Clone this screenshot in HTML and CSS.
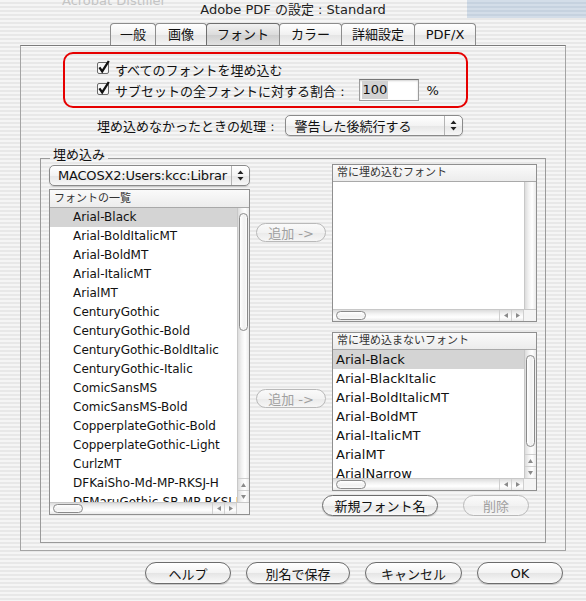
FILE: index.html
```html
<!DOCTYPE html>
<html>
    <head>
        <meta charset="utf-8">
        <title>Adobe PDF の設定 : Standard</title>
        <link rel="stylesheet" href="styles.css">
    </head>
    <body>
        <div class="titlebar">
            <span class="ghost">Acrobat Distiller</span>
            <span class="desk"></span>
            <span class="title">Adobe PDF の設定 : Standard</span>
        </div>

        <div class="tabs">
            <span class="tab">一般</span>
            <span class="tab">画像</span>
            <span class="tab active">フォント</span>
            <span class="tab">カラー</span>
            <span class="tab">詳細設定</span>
            <span class="tab">PDF/X</span>
        </div>

        <div class="panel">
            <div class="embed-opts">
                <div class="check-row">
                    <svg class="checkbox" width="14" height="15" viewBox="0 0 14 15">
                        <rect x="0.5" y="2.5" width="11" height="11" rx="1.5" fill="#f6f6f6" stroke="#6a6a6a"/>
                        <path d="M2.4 7.4 L5.2 11.4 L11.8 1" fill="none" stroke="#111" stroke-width="2.3"/>
                    </svg>
                    <span>すべてのフォントを埋め込む</span>
                </div>
                <div class="check-row">
                    <svg class="checkbox" width="14" height="15" viewBox="0 0 14 15">
                        <rect x="0.5" y="2.5" width="11" height="11" rx="1.5" fill="#f6f6f6" stroke="#6a6a6a"/>
                        <path d="M2.4 7.4 L5.2 11.4 L11.8 1" fill="none" stroke="#111" stroke-width="2.3"/>
                    </svg>
                    <span>サブセットの全フォントに対する割合 :</span>
                    <span class="field"><span class="sel">100</span></span>
                    <span class="pct">%</span>
                </div>
            </div>

            <div class="fail-row">
                <span>埋め込めなかったときの処理 :</span>
                <span class="popup fail">
                    <span class="popup-text">警告した後続行する</span>
                    <span class="popup-arrows">
                        <svg width="7" height="11" viewBox="0 0 7 11"><path d="M3.5 0.5 L6.5 4 L0.5 4 Z M0.5 7 L6.5 7 L3.5 10.5 Z" fill="#222"/></svg>
                    </span>
                </span>
            </div>

            <div class="group">
                <span class="group-title">埋め込み</span>

                <div class="col-left">
                    <span class="popup path">
                        <span class="popup-text">MACOSX2:Users:kcc:Librar</span>
                        <span class="popup-arrows">
                            <svg width="7" height="11" viewBox="0 0 7 11"><path d="M3.5 0.5 L6.5 4 L0.5 4 Z M0.5 7 L6.5 7 L3.5 10.5 Z" fill="#222"/></svg>
                        </span>
                    </span>

                    <div class="listbox fontlist">
                        <div class="list-head">フォントの一覧</div>
                        <div class="list-body">
                            <ul class="rows">
                                <li class="selected">Arial-Black</li>
                                <li>Arial-BoldItalicMT</li>
                                <li>Arial-BoldMT</li>
                                <li>Arial-ItalicMT</li>
                                <li>ArialMT</li>
                                <li>CenturyGothic</li>
                                <li>CenturyGothic-Bold</li>
                                <li>CenturyGothic-BoldItalic</li>
                                <li>CenturyGothic-Italic</li>
                                <li>ComicSansMS</li>
                                <li>ComicSansMS-Bold</li>
                                <li>CopperplateGothic-Bold</li>
                                <li>CopperplateGothic-Light</li>
                                <li>CurlzMT</li>
                                <li>DFKaiSho-Md-MP-RKSJ-H</li>
                                <li>DFMaruGothic-SB-MP-RKSJ-H</li>
                            </ul>
                            <div class="vscroll">
                                <span class="vthumb long"></span>
                                <span class="vspace"></span>
                                <span class="varrow"><svg width="5" height="4" viewBox="0 0 5 4"><path d="M2.5 0 L5 4 L0 4 Z" fill="#8a8a8a"/></svg></span>
                                <span class="varrow"><svg width="5" height="4" viewBox="0 0 5 4"><path d="M0 0 L5 0 L2.5 4 Z" fill="#8a8a8a"/></svg></span>
                            </div>
                        </div>
                        <div class="hscroll">
                            <span class="hthumb"></span>
                            <span class="hspace"></span>
                            <span class="harrow"><svg width="4" height="5" viewBox="0 0 4 5"><path d="M0 2.5 L4 0 L4 5 Z" fill="#8a8a8a"/></svg></span>
                            <span class="harrow"><svg width="4" height="5" viewBox="0 0 4 5"><path d="M0 0 L4 2.5 L0 5 Z" fill="#8a8a8a"/></svg></span>
                            <span class="corner"></span>
                        </div>
                    </div>
                </div>

                <div class="col-mid">
                    <span class="btn small disabled first">追加 -&gt;</span>
                    <span class="btn small disabled second">追加 -&gt;</span>
                </div>

                <div class="col-right">
                    <div class="listbox always">
                        <div class="list-head">常に埋め込むフォント</div>
                        <div class="list-body">
                            <ul class="rows big"></ul>
                            <div class="vscroll empty"></div>
                        </div>
                        <div class="hscroll">
                            <span class="hthumb"></span>
                            <span class="hspace"></span>
                            <span class="harrow"><svg width="4" height="5" viewBox="0 0 4 5"><path d="M0 2.5 L4 0 L4 5 Z" fill="#8a8a8a"/></svg></span>
                            <span class="harrow"><svg width="4" height="5" viewBox="0 0 4 5"><path d="M0 0 L4 2.5 L0 5 Z" fill="#8a8a8a"/></svg></span>
                            <span class="corner"></span>
                        </div>
                    </div>

                    <div class="listbox never">
                        <div class="list-head">常に埋め込まないフォント</div>
                        <div class="list-body">
                            <ul class="rows big">
                                <li class="selected">Arial-Black</li>
                                <li>Arial-BlackItalic</li>
                                <li>Arial-BoldItalicMT</li>
                                <li>Arial-BoldMT</li>
                                <li>Arial-ItalicMT</li>
                                <li>ArialMT</li>
                                <li>ArialNarrow</li>
                            </ul>
                            <div class="vscroll">
                                <span class="vthumb short"></span>
                                <span class="vspace"></span>
                                <span class="varrow"><svg width="5" height="4" viewBox="0 0 5 4"><path d="M2.5 0 L5 4 L0 4 Z" fill="#8a8a8a"/></svg></span>
                                <span class="varrow"><svg width="5" height="4" viewBox="0 0 5 4"><path d="M0 0 L5 0 L2.5 4 Z" fill="#8a8a8a"/></svg></span>
                            </div>
                        </div>
                        <div class="hscroll">
                            <span class="hthumb"></span>
                            <span class="hspace"></span>
                            <span class="harrow"><svg width="4" height="5" viewBox="0 0 4 5"><path d="M0 2.5 L4 0 L4 5 Z" fill="#8a8a8a"/></svg></span>
                            <span class="harrow"><svg width="4" height="5" viewBox="0 0 4 5"><path d="M0 0 L4 2.5 L0 5 Z" fill="#8a8a8a"/></svg></span>
                            <span class="corner"></span>
                        </div>
                    </div>

                    <div class="list-buttons">
                        <span class="btn newfont">新規フォント名</span>
                        <span class="btn delete disabled">削除</span>
                    </div>
                </div>
            </div>
        </div>

        <div class="actions">
            <span class="btn help">ヘルプ</span>
            <span class="btn saveas">別名で保存</span>
            <span class="btn cancel">キャンセル</span>
            <span class="btn ok">OK</span>
        </div>
    </body>
</html>
```

FILE: styles.css
```css
body {
    margin: 0;
    width: 586px;
    height: 601px;
    overflow: hidden;
    font-family: "DejaVu Sans", "Noto Sans CJK JP", sans-serif;
    font-size: 13px;
    color: #111;
    background: repeating-linear-gradient(#f5f5f5 0 2px, #e8e8e8 2px 4px) fixed;
}

/* title bar */
.titlebar {
    position: relative;
    height: 23px;
    display: flex;
    justify-content: center;
}
.title {
    margin-top: 2px;
    line-height: 16px;
    color: #222;
    position: relative;
}
.ghost {
    position: absolute;
    top: -7px;
    left: 62px;
    color: #c4c4c4;
    line-height: 16px;
}
.desk {
    position: absolute;
    top: 0;
    right: 0;
    width: 119px;
    height: 18px;
    background: repeating-linear-gradient(#d3dde8 0 2px, #c6d2df 2px 4px);
}

/* tabs */
.tabs {
    display: flex;
    justify-content: center;
    height: 22px;
    padding-left: 1px;
}
.tab {
    box-sizing: border-box;
    height: 22px;
    line-height: 21px;
    text-align: center;
    border: 1px solid #8c8c8c;
    border-bottom: none;
    border-radius: 4px 4px 0 0;
    margin-left: -1px;
    background: linear-gradient(#ffffff, #f1f1f1 50%, #e4e4e4 52%, #f4f4f4);
}
.tab:nth-child(1) { width: 46px; }
.tab:nth-child(2) { width: 52px; }
.tab:nth-child(3) { width: 74px; }
.tab:nth-child(4) { width: 63px; }
.tab:nth-child(5) { width: 74px; }
.tab:nth-child(6) { width: 62px; }
.tab.active {
    border-color: #6e6e6e;
    background: linear-gradient(#f2f2f2, #dcdcdc 50%, #cdcdcd 52%, #e2e2e2);
}

/* tab pane */
.panel {
    box-sizing: border-box;
    height: 506px;
    margin: 0 20px;
    border: 1px solid #a4a4a4;
    border-top-color: #7b7b7b;
    box-shadow: inset 0 1px 0 #fcfcfc;
}

.embed-opts {
    box-sizing: border-box;
    width: 405px;
    height: 56px;
    margin: 6px 0 0 42px;
    padding: 5px 0 0 32px;
    border: 2px solid #e60000;
    border-radius: 10px;
}
.check-row {
    display: flex;
    align-items: center;
    height: 20px;
}
.check-row + .check-row {
    height: 22px;
}
.checkbox {
    margin: -3px 4px 0 0;
    flex: none;
}
.field {
    box-sizing: border-box;
    width: 60px;
    height: 22px;
    margin-left: 14px;
    padding: 1px 0 0 2px;
    background: #fff;
    border: 1px solid #9c9c9c;
    border-top-color: #777;
    box-shadow: inset 0 1px 2px rgba(0,0,0,.18);
    font-size: 13px;
    line-height: 18px;
}
.sel {
    display: inline-block;
    height: 18px;
    background: #d2d2d2;
    padding: 0 1px;
}
.pct {
    margin-left: 8px;
}

.fail-row {
    display: flex;
    align-items: center;
    height: 21px;
    margin-top: 7px;
    padding-left: 76px;
}

/* popup menus */
.popup {
    box-sizing: border-box;
    display: flex;
    align-items: center;
    height: 21px;
    border: 1px solid #8a8a8a;
    border-radius: 5px;
    background: linear-gradient(#ffffff, #f3f3f3 50%, #e6e6e6 52%, #f7f7f7);
    box-shadow: 0 1px 1px rgba(0,0,0,.15);
}
.popup-text {
    flex: 1;
    padding-left: 9px;
    white-space: nowrap;
    overflow: hidden;
}
.popup-arrows {
    display: flex;
    align-items: center;
    justify-content: center;
    width: 17px;
    height: 100%;
    border-left: 1px solid #b4b4b4;
}
.popup.fail {
    width: 178px;
    margin-left: 10px;
}
.popup.path {
    width: 201px;
    font-size: 13px;
    letter-spacing: -0.2px;
}
.popup.path .popup-text {
    padding-left: 8px;
}

/* embed group */
.group {
    position: relative;
    box-sizing: border-box;
    display: grid;
    grid-template-columns: 201px 82px 205px;
    align-items: start;
    width: 506px;
    height: 385px;
    margin: 22px 0 0 19px;
    padding: 6px 8px 0 8px;
    border: 1px solid #9a9a9a;
}
.group-title {
    position: absolute;
    top: -12px;
    left: 9px;
    padding: 0 3px;
    line-height: 16px;
    background: repeating-linear-gradient(#f5f5f5 0 2px, #e8e8e8 2px 4px) fixed;
}

.col-left {
    display: flex;
    flex-direction: column;
}
.col-mid {
    display: flex;
    flex-direction: column;
    align-items: center;
}
.col-right {
    display: flex;
    flex-direction: column;
}

/* list boxes */
.listbox {
    box-sizing: border-box;
    display: flex;
    flex-direction: column;
    border: 1px solid #8f8f8f;
    background: #fff;
}
.fontlist {
    height: 326px;
    margin-top: 3px;
}
.always {
    height: 158px;
    margin-top: -1px;
}
.never {
    height: 159px;
    margin-top: 10px;
}
.list-head {
    flex: none;
    height: 16px;
    line-height: 16px;
    padding-left: 4px;
    font-size: 11px;
    color: #333;
    background: linear-gradient(#fafafa, #ececec);
    border-bottom: 1px solid #a9a9a9;
}
.fontlist .list-head {
    height: 17px;
    line-height: 17px;
}
.list-body {
    flex: 1;
    display: flex;
    min-height: 0;
}
.rows {
    flex: 1;
    margin: 0;
    padding: 0;
    list-style: none;
    overflow: hidden;
    font-size: 12px;
}
.rows li {
    height: 19px;
    line-height: 19px;
    padding-left: 23px;
    white-space: nowrap;
}
.rows.big {
    font-size: 13px;
}
.rows.big li {
    padding-left: 3px;
}
.rows li.selected {
    background: #d4d4d4;
}

.vscroll {
    flex: none;
    display: flex;
    flex-direction: column;
    width: 11px;
    border-left: 1px solid #c8c8c8;
    background: linear-gradient(to right, #dcdcdc, #f3f3f3 35%, #ffffff 65%, #e9e9e9);
}
.vthumb {
    box-sizing: border-box;
    margin: 5px 1px 0 1px;
    border: 1px solid #8a8a8a;
    border-radius: 5px;
    background: linear-gradient(to right, #ffffff, #f0f0f0 60%, #fbfbfb);
}
.vthumb.long {
    height: 118px;
}
.vthumb.short {
    height: 92px;
}
.vspace {
    flex: 1;
}
.varrow {
    display: flex;
    align-items: center;
    justify-content: center;
    height: 11px;
    border-top: 1px solid #cfcfcf;
}

.hscroll {
    flex: none;
    display: flex;
    height: 11px;
    border-top: 1px solid #c8c8c8;
    background: linear-gradient(#dcdcdc, #f3f3f3 35%, #ffffff 65%, #e9e9e9);
}
.hthumb {
    box-sizing: border-box;
    width: 30px;
    margin: 1px 0 1px 3px;
    border: 1px solid #8a8a8a;
    border-radius: 5px;
    background: linear-gradient(#ffffff, #f0f0f0 60%, #fbfbfb);
}
.hspace {
    flex: 1;
}
.harrow {
    display: flex;
    align-items: center;
    justify-content: center;
    width: 11px;
    border-left: 1px solid #cfcfcf;
}
.corner {
    width: 12px;
    background: #f4f4f4;
    border-left: 1px solid #cfcfcf;
}

/* push buttons */
.btn {
    box-sizing: border-box;
    display: flex;
    align-items: center;
    justify-content: center;
    height: 22px;
    border: 1px solid #6c6c6c;
    border-radius: 11px;
    background: linear-gradient(#ffffff, #f3f3f3 50%, #e5e5e5 52%, #fafafa);
    box-shadow: 0 1px 1px rgba(0,0,0,.2);
    white-space: nowrap;
}
.btn.disabled {
    color: #a0a0a0;
    border-color: #b9b9b9;
    box-shadow: none;
    background: linear-gradient(#fafafa, #f2f2f2 50%, #eaeaea 52%, #f6f6f6);
}
.btn.small {
    width: 70px;
    height: 19px;
    font-size: 13px;
}
.col-mid .first {
    margin-top: 58px;
}
.col-mid .second {
    margin-top: 147px;
}

.list-buttons {
    display: flex;
    margin: 4px 0 0 -10px;
}
.newfont {
    width: 116px;
    height: 21px;
}
.delete {
    width: 66px;
    height: 21px;
    margin-left: 25px;
}

/* dialog buttons */
.actions {
    display: flex;
    justify-content: flex-end;
    gap: 15px;
    margin-top: 11px;
    padding-right: 23px;
}
.help { width: 86px; }
.saveas { width: 104px; }
.cancel { width: 97px; }
.ok { width: 86px; }
```
